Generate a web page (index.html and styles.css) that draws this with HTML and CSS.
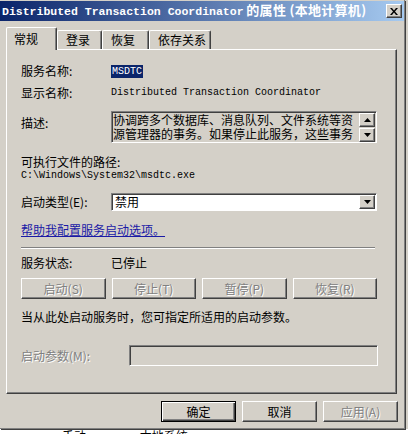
FILE: index.html
```html
<!DOCTYPE html>
<html lang="zh-CN">
<head>
    <meta charset="UTF-8">
    <title>Distributed Transaction Coordinator 的属性(本地计算机)</title>
    <link rel="stylesheet" href="styles.css">
</head>
<body>
    <div class="screen">
        <div class="window">
            <div class="titlebar">
                <span class="title"><span class="title-en">Distributed Transaction Coordinator</span> <span class="title-zh">的属性 (本地计算机)</span></span>
                <span class="close">
                    <svg width="8" height="7" viewBox="0 0 8 7"><path d="M0 0h2l2 2.5L6 0h2L5 3.5 8 7H6L4 4.5 2 7H0l3-3.5z" fill="#000"/></svg>
                </span>
            </div>

            <div class="tabs">
                <div class="tab active">常规</div>
                <div class="tab">登录</div>
                <div class="tab">恢复</div>
                <div class="tab">依存关系</div>
            </div>

            <div class="panel">
                <div class="row">
                    <span class="label">服务名称:</span>
                    <span class="mono selected">MSDTC</span>
                </div>
                <div class="row row-display">
                    <span class="label">显示名称:</span>
                    <span class="mono">Distributed Transaction Coordinator</span>
                </div>
                <div class="row row-desc">
                    <span class="label">描述:</span>
                    <div class="desc">
                        <div class="desc-text">协调跨多个数据库、消息队列、文件系统等资<br>源管理器的事务。如果停止此服务，这些事务</div>
                        <div class="scroll">
                            <span class="scroll-btn"><svg width="7" height="4" viewBox="0 0 7 4"><path d="M3.5 0L7 4H0z" fill="#000"/></svg></span>
                            <span class="scroll-btn"><svg width="7" height="4" viewBox="0 0 7 4"><path d="M0 0h7L3.5 4z" fill="#000"/></svg></span>
                        </div>
                    </div>
                </div>
                <div class="row row-pathlabel">可执行文件的路径:</div>
                <div class="row row-path mono">C:\Windows\System32\msdtc.exe</div>
                <div class="row row-select">
                    <span class="label">启动类型(E):</span>
                    <div class="select">
                        <span class="select-value">禁用</span>
                        <span class="select-btn"><svg width="7" height="4" viewBox="0 0 7 4"><path d="M0 0h7L3.5 4z" fill="#000"/></svg></span>
                    </div>
                </div>
                <div class="row row-link"><a class="link" href="#">帮助我配置服务启动选项。</a></div>
                <div class="separator"></div>
                <div class="row row-status">
                    <span class="label">服务状态:</span>
                    <span>已停止</span>
                </div>
                <div class="service-buttons">
                    <button class="btn" disabled>启动(S)</button>
                    <button class="btn" disabled>停止(T)</button>
                    <button class="btn" disabled>暂停(P)</button>
                    <button class="btn" disabled>恢复(R)</button>
                </div>
                <div class="row row-hint">当从此处启动服务时，您可指定所适用的启动参数。</div>
                <div class="row row-params">
                    <span class="label label-wide disabled-text">启动参数(M):</span>
                    <div class="field"></div>
                </div>
            </div>

            <div class="actions">
                <button class="btn btn-action btn-default">确定</button>
                <button class="btn btn-action">取消</button>
                <button class="btn btn-action" disabled>应用(A)</button>
            </div>
        </div>
    </div>
    <div class="behind">
        <span class="behind-a">手动</span>
        <span class="behind-b">本地系统</span>
    </div>
</body>
</html>
```

FILE: styles.css
```css
body {
    margin: 0;
    background-color: #fff;
    font-family: "Noto Sans CJK SC", "DejaVu Sans", sans-serif;
    font-size: 12px;
    line-height: 14px;
    color: #000;
}
.screen {
    width: 408px;
    background-color: #d4d0c8;
}
.window {
    width: 404px;
    height: 427px;
    padding-top: 1px;
    border-right: 1px solid #808080;
    border-bottom: 1px solid #808080;
    box-shadow: 1px 1px 0 #404040;
    background-color: #d4d0c8;
}
.titlebar {
    height: 20px;
    display: flex;
    align-items: center;
    justify-content: space-between;
    padding-left: 2px;
    background: linear-gradient(to right, #0a246a, #a6caf0);
    color: #fff;
}
.title {
    font-weight: bold;
    font-size: 12px;
    white-space: nowrap;
}
.title-en {
    font-family: "Liberation Mono", monospace;
    font-size: 11.5px;
}
.title-zh {
    font-size: 13px;
    letter-spacing: 0.3px;
}
.close {
    width: 16px;
    height: 14px;
    margin-right: 2px;
    box-sizing: border-box;
    display: flex;
    align-items: center;
    justify-content: center;
    background-color: #d4d0c8;
    border: 1px solid;
    border-color: #fff #404040 #404040 #fff;
    box-shadow: inset -1px -1px #808080;
}
.tabs {
    display: flex;
    align-items: flex-end;
    height: 22px;
    margin-top: 6px;
    padding-left: 6px;
    position: relative;
    z-index: 1;
}
.tab {
    height: 19px;
    box-sizing: border-box;
    padding: 2px 0 0 8px;
    border-top: 1px solid #fff;
    border-left: 1px solid #fff;
    border-right: 1px solid #404040;
    box-shadow: inset -1px 0 #808080;
    border-radius: 2px 2px 0 0;
}
.tab:nth-child(2) { width: 45px; }
.tab:nth-child(3) { width: 47px; }
.tab:nth-child(4) { width: 62px; }
.tab.active {
    width: 51px;
    height: 23px;
    padding: 4px 0 0 7px;
    margin-bottom: -1px;
    background-color: #d4d0c8;
}
.panel {
    width: 391px;
    height: 345px;
    margin-left: 6px;
    box-sizing: border-box;
    padding: 14px 19px 0 14px;
    border: 1px solid;
    border-color: #fff #404040 #404040 #fff;
    box-shadow: inset -1px -1px #808080;
}
.row {
    display: flex;
    align-items: center;
    height: 14px;
    white-space: nowrap;
}
.label {
    width: 90px;
    flex: none;
}
.label-wide {
    width: 108px;
}
.mono {
    font-family: "Liberation Mono", monospace;
    font-size: 10px;
}
.selected {
    background-color: #0a246a;
    color: #fff;
    padding: 0 1px;
    line-height: 13px;
}
.row-display { margin-top: 8px; }
.row-desc {
    margin-top: 11px;
    height: 32px;
    align-items: flex-start;
}
.row-desc .label { padding-top: 5px; }
.desc {
    flex: 1;
    height: 32px;
    box-sizing: border-box;
    display: flex;
    border: 1px solid;
    border-color: #808080 #fff #fff #808080;
    box-shadow: inset 1px 1px #404040;
}
.desc-text {
    flex: 1;
    overflow: hidden;
    padding: 1px 0 0 1px;
    line-height: 14px;
    white-space: nowrap;
}
.scroll {
    width: 16px;
    padding: 1px 1px 0 0;
    display: flex;
    flex-direction: column;
    gap: 1px;
}
.scroll-btn {
    height: 14px;
    box-sizing: border-box;
    display: flex;
    align-items: center;
    justify-content: center;
    border: 1px solid;
    border-color: #fff #404040 #404040 #fff;
    box-shadow: inset -1px -1px #808080;
}
.row-pathlabel { margin-top: 12px; }
.row-path {
    margin-top: 1px;
    height: 12px;
}
.row-select {
    margin-top: 11px;
    height: 18px;
}
.select {
    flex: 1;
    height: 18px;
    box-sizing: border-box;
    display: flex;
    align-items: center;
    justify-content: space-between;
    background-color: #fff;
    border: 1px solid;
    border-color: #808080 #fff #fff #808080;
    box-shadow: inset 1px 1px #404040;
}
.select-value { padding-left: 3px; }
.select-btn {
    width: 16px;
    height: 14px;
    margin-right: 1px;
    box-sizing: border-box;
    display: flex;
    align-items: center;
    justify-content: center;
    background-color: #d4d0c8;
    border: 1px solid;
    border-color: #fff #404040 #404040 #fff;
    box-shadow: inset -1px -1px #808080;
}
.row-link { margin-top: 12px; }
.link {
    color: #1a1aa6;
    text-decoration: underline;
}
.separator {
    margin-top: 10px;
    height: 1px;
    border-top: 1px solid #808080;
    background-color: #fff;
    margin-right: 2px;
}
.row-status { margin-top: 7px; }
.service-buttons {
    margin-top: 8px;
    display: flex;
    gap: 6px;
}
.service-buttons .btn {
    flex: 1;
}
.btn {
    height: 21px;
    padding: 0;
    box-sizing: border-box;
    font-family: "Noto Sans CJK SC", "DejaVu Sans", sans-serif;
    font-size: 12px;
    color: #000;
    background-color: #d4d0c8;
    border: 1px solid;
    border-color: #fff #404040 #404040 #fff;
    box-shadow: inset -1px -1px #808080;
}
.btn:disabled {
    color: #808080;
    text-shadow: 1px 1px #fff;
}
.row-hint { margin-top: 11px; }
.row-params {
    margin-top: 21px;
    height: 21px;
}
.disabled-text {
    color: #808080;
    text-shadow: 1px 1px #fff;
}
.field {
    flex: 1;
    height: 21px;
    margin-right: -1px;
    box-sizing: border-box;
    border: 1px solid;
    border-color: #808080 #fff #fff #808080;
    box-shadow: inset 1px 1px #404040;
}
.actions {
    margin-top: 7px;
    display: flex;
    justify-content: flex-end;
    gap: 6px;
    padding-right: 6px;
}
.btn-action {
    width: 75px;
    height: 21px;
}
.btn-default {
    border-color: #000;
    box-shadow: inset 1px 1px #fff, inset -1px -1px #404040, inset -2px -2px #808080;
}
.behind {
    height: 5px;
    overflow: hidden;
}
.behind span {
    display: inline-block;
    margin-top: -1px;
}
.behind-a { margin-left: 62px; }
.behind-b { margin-left: 51px; }
```
